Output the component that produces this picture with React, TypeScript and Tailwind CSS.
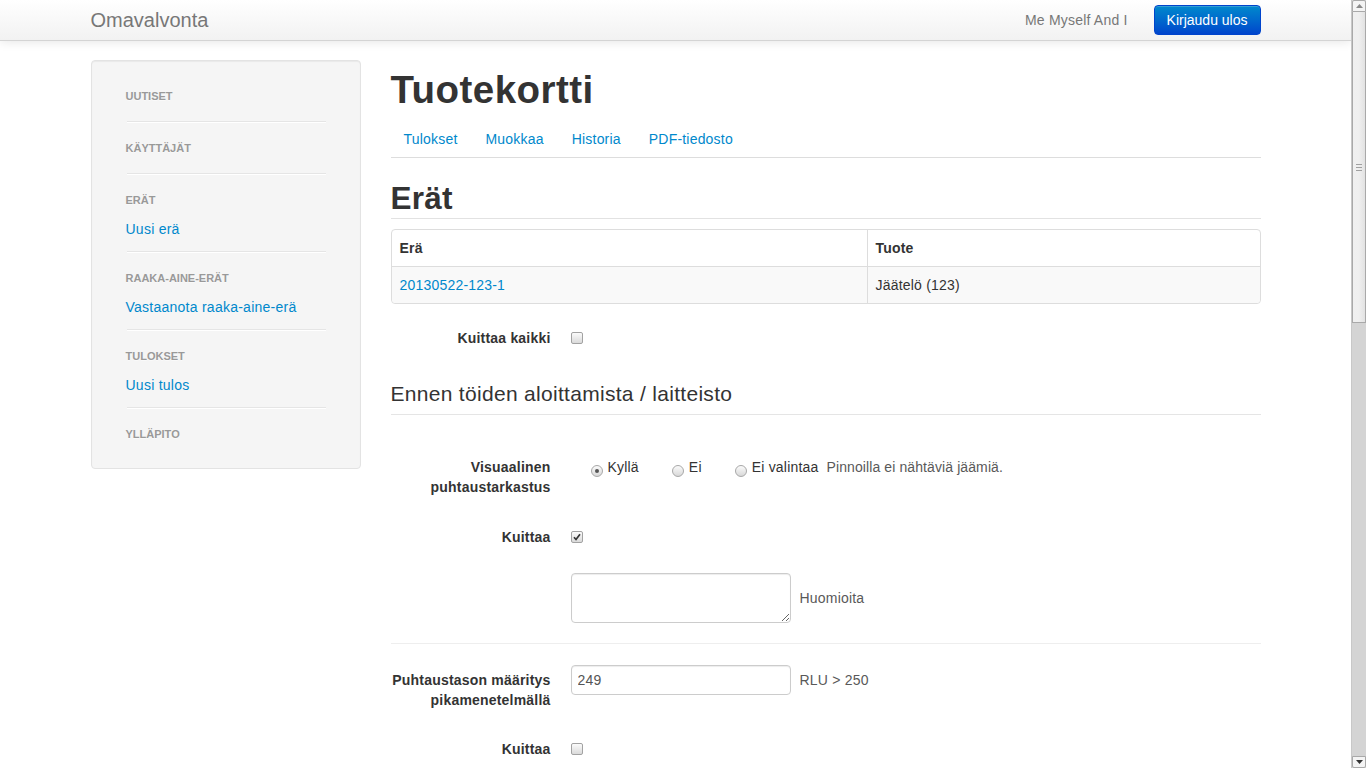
import React from "react";

const navSections = [
  { header: "Uutiset", links: [] as string[] },
  { header: "Käyttäjät", links: [] as string[] },
  { header: "Erät", links: ["Uusi erä"] },
  { header: "Raaka-aine-erät", links: ["Vastaanota raaka-aine-erä"] },
  { header: "Tulokset", links: ["Uusi tulos"] },
  { header: "Ylläpito", links: [] as string[] },
];

const tabs = ["Tulokset", "Muokkaa", "Historia", "PDF-tiedosto"];

const Checkbox = ({ checked = false }: { checked?: boolean }) => (
  <span className="flex h-[12px] w-[12px] shrink-0 items-center justify-center rounded-[2px] border border-[#a2a2a2] bg-linear-to-b from-[#fbfbfb] to-[#dadada]">
    {checked && (
      <svg width="8" height="8" viewBox="0 0 8 8">
        <path d="M1 4.3 L3 6.5 L7 1.2" fill="none" stroke="#333" strokeWidth="1.7" />
      </svg>
    )}
  </span>
);

const Radio = ({ checked = false, label }: { checked?: boolean; label: string }) => (
  <label className="flex items-start gap-[5px]">
    <span className="mt-[13px] flex h-[12px] w-[12px] shrink-0 items-center justify-center rounded-full border border-[#a8a8a8] bg-linear-to-b from-[#fbfbfb] to-[#d8d8d8]">
      {checked && <span className="h-[4px] w-[4px] rounded-full bg-[#555]" />}
    </span>
    <span className="pt-[5px] leading-[20px]">{label}</span>
  </label>
);

const ControlLabel = ({ children }: { children: React.ReactNode }) => (
  <div className="w-[160px] shrink-0 pt-[5px] text-right font-bold leading-[20px] text-[#333]">
    {children}
  </div>
);

const Scrollbar = () => (
  <div className="flex h-screen w-[15px] shrink-0 flex-col border-l border-[#c8c8c8] bg-[#d4d4d4]">
    <div className="flex h-[12px] items-center justify-center rounded-t-[2px] border border-[#a9a9a9] bg-[#f4f4f4]">
      <svg width="7" height="4" viewBox="0 0 7 4">
        <path d="M0 4 L3.5 0 L7 4 Z" fill="#8a8a8a" />
      </svg>
    </div>
    <div className="flex h-[311px] items-center justify-center border border-t-0 border-[#a9a9a9] bg-linear-to-r from-[#f0f0f0] via-[#efefef] to-[#e2e2e2]">
      <div className="flex flex-col gap-[2px]">
        <span className="h-px w-[6px] bg-[#a0a0a0]" />
        <span className="h-px w-[6px] bg-[#a0a0a0]" />
        <span className="h-px w-[6px] bg-[#a0a0a0]" />
      </div>
    </div>
    <div className="flex-1" />
    <div className="flex h-[12px] items-center justify-center rounded-b-[2px] border border-[#a9a9a9] bg-[#f4f4f4]">
      <svg width="7" height="4" viewBox="0 0 7 4">
        <path d="M0 0 L7 0 L3.5 4 Z" fill="#333" />
      </svg>
    </div>
  </div>
);

export default function App() {
  return (
    <div className="flex h-screen overflow-hidden bg-white font-['Liberation_Sans',Arial,sans-serif] text-[14px] tracking-[0.2px] text-[#333]">
      <div className="min-w-0 flex-1 overflow-hidden">
        {/* navbar */}
        <header className="relative z-10 h-[41px] border-b border-[#d4d4d4] bg-linear-to-b from-white to-[#f2f2f2] shadow-[0_1px_10px_rgba(0,0,0,0.1)]">
          <div className="mx-auto flex h-[40px] w-[1170px] items-center justify-between">
            <a className="text-[20px] leading-[20px] tracking-normal text-[#777]">Omavalvonta</a>
            <div className="flex items-center gap-[26px]">
              <span className="text-[#777]">Me Myself And I</span>
              <button className="h-[30px] rounded-[4px] border border-[#0044cc] bg-linear-to-b from-[#0088cc] to-[#0044cc] px-[12px] leading-[20px] tracking-normal text-white shadow-[inset_0_1px_0_rgba(255,255,255,0.2)]">
                Kirjaudu ulos
              </button>
            </div>
          </div>
        </header>

        <div className="mx-auto flex w-[1170px] gap-[30px] pt-[19px]">
          {/* sidebar */}
          <aside className="w-[270px] shrink-0 self-start rounded-[4px] border border-[#e3e3e3] bg-[#f5f5f5] px-[34px] pt-[22px] pb-[21px] shadow-[inset_0_1px_1px_rgba(0,0,0,0.05)]">
            {navSections.map((s, i) => (
              <div key={s.header}>
                <div className="h-[26px] text-[11px] leading-[26px] font-bold tracking-normal uppercase text-[#999] [text-shadow:0_1px_0_rgba(255,255,255,0.5)]">
                  {s.header}
                </div>
                {s.links.map((l) => (
                  <a key={l} className="mt-[3px] block h-[26px] leading-[26px] tracking-[0.25px] text-[#0088cc]">
                    {l}
                  </a>
                ))}
                {i < navSections.length - 1 && (
                  <div
                    className={`${s.links.length ? "mt-[9px]" : "mt-[12px]"} mb-[12px] ml-px h-[2px] border-t border-b border-t-[#e5e5e5] border-b-white`}
                  />
                )}
              </div>
            ))}
          </aside>

          {/* content */}
          <main className="w-[870px] shrink-0">
            <h1 className="mt-[10px] mb-[9px] text-[38.5px] leading-[40px] font-bold tracking-[0.45px] text-[#333]">
              Tuotekortti
            </h1>
            <ul className="flex border-b border-[#ddd]">
              {tabs.map((t) => (
                <li key={t}>
                  <a className="mr-[2px] block border border-transparent px-[12px] pt-[9px] pb-[7px] leading-[20px] text-[#0088cc]">
                    {t}
                  </a>
                </li>
              ))}
            </ul>

            <h2 className="mt-[20px] border-b border-[#e2e2e2] text-[31.5px] leading-[40px] font-bold">Erät</h2>

            <table className="mt-[10px] w-full border-separate border-spacing-0 rounded-[4px] border border-[#ddd] leading-[20px]">
              <thead>
                <tr>
                  <th className="w-[475px] p-[8px] text-left font-bold">Erä</th>
                  <th className="border-l border-[#ddd] p-[8px] text-left font-bold">Tuote</th>
                </tr>
              </thead>
              <tbody>
                <tr>
                  <td className="rounded-bl-[4px] border-t border-[#ddd] bg-[#f9f9f9] p-[8px]">
                    <a className="text-[#0088cc]">20130522-123-1</a>
                  </td>
                  <td className="rounded-br-[4px] border-t border-l border-[#ddd] bg-[#f9f9f9] p-[8px]">Jäätelö (123)</td>
                </tr>
              </tbody>
            </table>

            <form>
              <div className="mt-[19px] flex h-[30px]">
                <ControlLabel>Kuittaa kaikki</ControlLabel>
                <div className="ml-[20px] flex items-start pt-[9px]">
                  <Checkbox />
                </div>
              </div>

              <legend className="mt-[21px] block w-full border-b border-[#e5e5e5] text-[21px] leading-[40px] tracking-[0.3px] text-[#333]">
                Ennen töiden aloittamista / laitteisto
              </legend>

              <div className="mt-[37px] flex">
                <ControlLabel>Visuaalinen puhtaustarkastus</ControlLabel>
                <div className="ml-[20px] flex items-start">
                  <div className="ml-[20px] flex gap-[33px]">
                    <Radio checked label="Kyllä" />
                    <Radio label="Ei" />
                    <Radio label="Ei valintaa" />
                  </div>
                  <span className="ml-[8px] pt-[5px] leading-[20px] tracking-[0.1px] text-[#595959]">Pinnoilla ei nähtäviä jäämiä.</span>
                </div>
              </div>

              <div className="mt-[25px] flex h-[30px]">
                <ControlLabel>Kuittaa</ControlLabel>
                <div className="ml-[20px] flex items-start pt-[9px]">
                  <Checkbox checked />
                </div>
              </div>

              <div className="mt-[21px] ml-[180px] flex items-center">
                <textarea className="h-[50px] w-[220px] resize-y rounded-[4px] border border-[#ccc] px-[6px] py-[4px] shadow-[inset_0_1px_1px_rgba(0,0,0,0.075)] outline-none" />
                <span className="ml-[9px] text-[#595959]">Huomioita</span>
              </div>

              <hr className="mt-[20px] h-[2px] border-t border-b border-t-[#eee] border-b-white" />

              <div className="mt-[20px] flex">
                <ControlLabel>Puhtaustason määritys pikamenetelmällä</ControlLabel>
                <div className="ml-[20px] flex h-[30px] items-center">
                  <input
                    defaultValue="249"
                    className="h-[30px] w-[220px] rounded-[4px] border border-[#ccc] px-[6px] leading-[20px] text-[#555] shadow-[inset_0_1px_1px_rgba(0,0,0,0.075)] outline-none"
                  />
                  <span className="ml-[9px] text-[#595959]">RLU &gt; 250</span>
                </div>
              </div>

              <div className="mt-[24px] flex h-[30px]">
                <ControlLabel>Kuittaa</ControlLabel>
                <div className="ml-[20px] flex items-start pt-[9px]">
                  <Checkbox />
                </div>
              </div>
            </form>
          </main>
        </div>
      </div>
      <Scrollbar />
    </div>
  );
}
